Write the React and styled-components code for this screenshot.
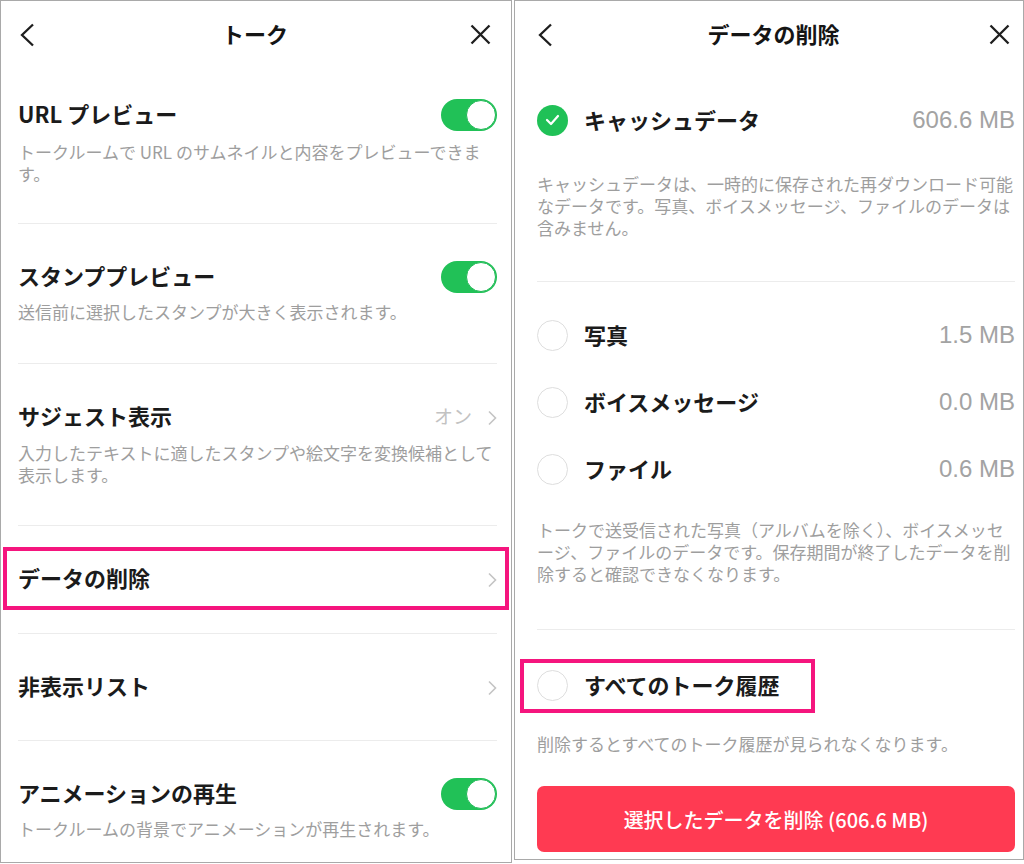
import React from "react";
import styled, { createGlobalStyle } from "styled-components";

const GlobalStyle = createGlobalStyle`
  html, body {
    margin: 0;
    padding: 0;
    background: #fff;
  }
  body {
    font-family: "Noto Sans CJK JP", "Noto Sans", sans-serif;
    color: #1b1b1b;
  }
`;

const Board = styled.div`
  display: flex;
  align-items: flex-start;
  gap: 2px;
  width: 1024px;
  height: 864px;
`;

const Phone = styled.div`
  box-sizing: border-box;
  width: ${(p) => p.$w}px;
  height: ${(p) => p.$h}px;
  border: 1px solid #a9a9a9;
  background: #fff;
  display: flex;
  flex-direction: column;
  overflow: hidden;
`;

const Header = styled.header`
  box-sizing: border-box;
  height: 61px;
  flex-shrink: 0;
  padding: 2px ${(p) => p.$right}px 0 ${(p) => p.$left}px;
  display: grid;
  grid-template-columns: 40px 1fr 40px;
  align-items: center;
`;

const HeaderTitle = styled.h1`
  margin: 0;
  text-align: center;
  font-size: 22px;
  font-weight: 700;
  color: #151515;
`;

const IconSlot = styled.span`
  display: flex;
  justify-content: ${(p) => (p.$end ? "flex-end" : "flex-start")};
  margin-top: 4px;
  color: #1e1e1e;
`;

/* ---------- left: talk settings ---------- */

const Setting = styled.section`
  margin: 0 14px 0 17px;
  padding: ${(p) => p.$pad || "37px 0 40px"};
  border-bottom: ${(p) => (p.$last ? "none" : "1px solid #ececec")};
`;

const SettingHead = styled.div`
  position: relative;
  display: flex;
  align-items: center;
  justify-content: space-between;
  height: 28px;
`;

const SettingTitle = styled.span`
  font-size: 22px;
  font-weight: 700;
  line-height: 28px;
`;

const Note = styled.p`
  margin: ${(p) => p.$top}px 0 0;
  font-size: 17px;
  line-height: 22px;
  color: #9e9e9e;
  white-space: nowrap;
`;

const Toggle = styled.span`
  position: relative;
  display: block;
  width: 56px;
  height: 32px;
  margin-top: 4px;
  border-radius: 16px;
  background: #21c157;
  flex-shrink: 0;

  &::after {
    content: "";
    position: absolute;
    top: 1px;
    right: 1px;
    box-sizing: border-box;
    width: 30px;
    height: 30px;
    border-radius: 50%;
    background: #fff;
    border: 1px solid #1fb955;
  }
`;

const Arrow = styled.span`
  display: flex;
  margin-top: 5px;
`;

const Trail = styled.span`
  display: flex;
  align-items: center;
  gap: 15px;
  color: #c2c2c2;
  font-size: 19px;
`;

const Callout = styled.span`
  position: absolute;
  box-sizing: border-box;
  border: 4px solid #f5157e;
  top: ${(p) => p.$top}px;
  bottom: ${(p) => p.$bottom}px;
  left: ${(p) => p.$left}px;
  right: ${(p) => (p.$right == null ? "auto" : `${p.$right}px`)};
  width: ${(p) => (p.$width ? `${p.$width}px` : "auto")};
  pointer-events: none;
`;

/* ---------- right: delete data ---------- */

const Body = styled.div`
  padding: 0 8px 0 22px;
`;

const Group = styled.div`
  padding: ${(p) => p.$pad};
  border-bottom: ${(p) => (p.$line ? "1px solid #ececec" : "none")};
`;

const OptionList = styled.div`
  display: flex;
  flex-direction: column;
  gap: 35px;
`;

const Option = styled.div`
  position: relative;
  display: flex;
  align-items: center;
  height: 32px;
`;

const Radio = styled.span`
  box-sizing: border-box;
  width: 31px;
  height: 31px;
  border-radius: 50%;
  flex-shrink: 0;
  display: flex;
  align-items: center;
  justify-content: center;
  border: ${(p) => (p.$on ? "none" : "1.5px solid #dedede")};
  background: ${(p) => (p.$on ? "#20c157" : "#fff")};
`;

const OptionLabel = styled.span`
  margin-left: 16px;
  margin-top: -3px;
  font-size: 22px;
  font-weight: 700;
  line-height: 32px;
`;

const Size = styled.span`
  margin-left: auto;
  font-family: "Liberation Sans", Arial, sans-serif;
  font-size: 24px;
  color: #a3a3a3;
`;

const DeleteButton = styled.button`
  display: block;
  width: 100%;
  height: 66px;
  margin-top: 31px;
  border: none;
  border-radius: 7px;
  background: #ff3a52;
  color: #fff;
  font-family: "Noto Sans CJK JP", "Noto Sans", sans-serif;
  font-size: 20px;
  font-weight: 500;
`;

const Back = () => (
  <svg width="16" height="24" viewBox="0 0 16 24" fill="none">
    <path d="M14 1.5 L3 12 L14 22.5" stroke="currentColor" strokeWidth="2.3" />
  </svg>
);

const Close = () => (
  <svg width="21" height="21" viewBox="0 0 21 21" fill="none">
    <path d="M1.5 1.5 L19.5 19.5 M19.5 1.5 L1.5 19.5" stroke="currentColor" strokeWidth="2.3" />
  </svg>
);

const Chevron = () => (
  <svg width="10" height="16" viewBox="0 0 10 16" fill="none">
    <path d="M2 1.5 L8.5 8 L2 14.5" stroke="#c4c4c4" strokeWidth="1.6" />
  </svg>
);

const Check = () => (
  <svg width="15" height="12" viewBox="0 0 15 12" fill="none">
    <path d="M2 6 L6 10 L13 2" stroke="#fff" strokeWidth="2.2" strokeLinecap="round" strokeLinejoin="round" />
  </svg>
);

const TopBar = ({ title, left, right }) => (
  <Header $left={left} $right={right}>
    <IconSlot>
      <Back />
    </IconSlot>
    <HeaderTitle>{title}</HeaderTitle>
    <IconSlot $end>
      <Close />
    </IconSlot>
  </Header>
);

export default function App() {
  return (
    <>
      <GlobalStyle />
      <Board>
        <Phone $w={512} $h={863}>
          <TopBar title="トーク" left={18} right={20} />

          <Setting $pad="37px 0 38px">
            <SettingHead>
              <SettingTitle>URL プレビュー</SettingTitle>
              <Toggle />
            </SettingHead>
            <Note $top={14}>
              トークルームで URL のサムネイルと内容をプレビューできま
              <br />す。
            </Note>
          </Setting>

          <Setting>
            <SettingHead>
              <SettingTitle>スタンププレビュー</SettingTitle>
              <Toggle />
            </SettingHead>
            <Note $top={12}>送信前に選択したスタンプが大きく表示されます。</Note>
          </Setting>

          <Setting $pad="37px 0 39px">
            <SettingHead>
              <SettingTitle>サジェスト表示</SettingTitle>
              <Trail>
                オン
                <Arrow>
                  <Chevron />
                </Arrow>
              </Trail>
            </SettingHead>
            <Note $top={13}>
              入力したテキストに適したスタンプや絵文字を変換候補として
              <br />
              表示します。
            </Note>
          </Setting>

          <Setting $pad="37px 0 42px">
            <SettingHead>
              <SettingTitle>データの削除</SettingTitle>
              <Arrow>
                <Chevron />
              </Arrow>
              <Callout $top={-16} $bottom={-19} $left={-15} $right={-12} />
            </SettingHead>
          </Setting>

          <Setting $pad="37px 0 41px">
            <SettingHead>
              <SettingTitle>非表示リスト</SettingTitle>
              <Arrow>
                <Chevron />
              </Arrow>
            </SettingHead>
          </Setting>

          <Setting $last>
            <SettingHead>
              <SettingTitle>アニメーションの再生</SettingTitle>
              <Toggle />
            </SettingHead>
            <Note $top={12}>トークルームの背景でアニメーションが再生されます。</Note>
          </Setting>
        </Phone>

        <Phone $w={510} $h={860}>
          <TopBar title="データの削除" left={22} right={13} />
          <Body>
            <Group $pad="42px 0 42px" $line>
              <Option>
                <Radio $on>
                  <Check />
                </Radio>
                <OptionLabel>キャッシュデータ</OptionLabel>
                <Size>606.6 MB</Size>
              </Option>
              <Note $top={37}>
                キャッシュデータは、一時的に保存された再ダウンロード可能
                <br />
                なデータです。写真、ボイスメッセージ、ファイルのデータは
                <br />
                含みません。
              </Note>
            </Group>

            <Group $pad="37px 0 44px" $line>
              <OptionList>
                <Option>
                  <Radio />
                  <OptionLabel>写真</OptionLabel>
                  <Size>1.5 MB</Size>
                </Option>
                <Option>
                  <Radio />
                  <OptionLabel>ボイスメッセージ</OptionLabel>
                  <Size>0.0 MB</Size>
                </Option>
                <Option>
                  <Radio />
                  <OptionLabel>ファイル</OptionLabel>
                  <Size>0.6 MB</Size>
                </Option>
              </OptionList>
              <Note $top={34}>
                トークで送受信された写真（アルバムを除く）、ボイスメッセ
                <br />
                ージ、ファイルのデータです。保存期間が終了したデータを削
                <br />
                除すると確認できなくなります。
              </Note>
            </Group>

            <Group $pad="39px 0 0">
              <Option>
                <Radio />
                <OptionLabel>すべてのトーク履歴</OptionLabel>
                <Callout $top={-10} $bottom={-12} $left={-17} $width={295} />
              </Option>
              <Note $top={32}>削除するとすべてのトーク履歴が見られなくなります。</Note>
              <DeleteButton>選択したデータを削除 (606.6 MB)</DeleteButton>
            </Group>
          </Body>
        </Phone>
      </Board>
    </>
  );
}
